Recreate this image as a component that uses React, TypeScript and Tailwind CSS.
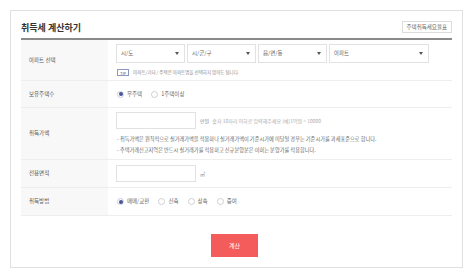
import React, { useState } from "react";

const font = { fontFamily: '"Noto Sans CJK KR", "Noto Sans", sans-serif' };

const Select = ({ label, width }: { label: string; width: string }) => (
  <div
    className={`${width} h-[19px] border border-[#e2e2e2] bg-white flex items-center justify-between pl-[4px] pr-[5px] text-[5.5px] text-[#666]`}
  >
    <span>{label}</span>
    <span className="w-0 h-0 border-l-[2px] border-r-[2px] border-t-[3px] border-l-transparent border-r-transparent border-t-[#555]" />
  </div>
);

const Radio = ({
  label,
  checked,
  onClick,
}: {
  label: string;
  checked: boolean;
  onClick: () => void;
}) => (
  <button onClick={onClick} className="flex items-center gap-[3px] text-[5.5px] text-[#666]">
    <span
      className={`w-[7px] h-[7px] rounded-full border flex items-center justify-center ${
        checked ? "border-[#c9cde0]" : "border-[#cfcfcf]"
      }`}
    >
      {checked && <span className="w-[4px] h-[4px] rounded-full bg-[#4a5595]" />}
    </span>
    {label}
  </button>
);

const Row = ({
  label,
  height,
  children,
}: {
  label: string;
  height: string;
  children: React.ReactNode;
}) => (
  <div className={`flex ${height} border-b border-[#eeeeee]`}>
    <div className="w-[87px] shrink-0 bg-[#f8f8f8] flex items-center pl-[8px] text-[5.5px] text-[#555]">
      {label}
    </div>
    <div className="flex-1 flex flex-col justify-center pl-[8px]">{children}</div>
  </div>
);

export default function App() {
  const [owned, setOwned] = useState(0);
  const [method, setMethod] = useState(0);

  return (
    <div className="w-[473px] h-[278px] bg-white p-[10px]" style={font}>
      <div className="h-[258px] border border-[#e0e0e0] px-[10px] flex flex-col">
        {/* Header */}
        <div className="h-[29px] flex items-center justify-between border-b-2 border-[#8a8a8a] shrink-0">
          <h1 className="text-[9px] font-bold text-[#333] pt-[7px]">취득세 계산하기</h1>
          <button className="h-[12px] px-[4px] mt-[5px] border border-[#dcdcdc] text-[5.5px] text-[#666] bg-white">
            주택취득세요율표
          </button>
        </div>

        {/* Table */}
        <Row label="아파트 선택" height="h-[41px]">
          <div className="flex gap-[2px]">
            <Select label="시/도" width="w-[69px]" />
            <Select label="시/군/구" width="w-[69px]" />
            <Select label="읍/면/동" width="w-[69px]" />
            <Select label="아파트" width="w-[100px]" />
          </div>
          <div className="flex items-center gap-[4px] mt-[6px] ml-[1px]">
            <span className="h-[7px] px-[2px] border border-[#8d96c0] text-[4px] leading-none text-[#4a5595] flex items-center">
              TIP
            </span>
            <span className="text-[4.5px] text-[#888]">
              아파트/기타 / 주택은 아파트명을 선택하지 않아도 됩니다.
            </span>
          </div>
        </Row>

        <Row label="보유주택수" height="h-[27px]">
          <div className="flex items-center gap-[9px] ml-[1px]">
            <Radio label="무주택" checked={owned === 0} onClick={() => setOwned(0)} />
            <Radio label="1주택이상" checked={owned === 1} onClick={() => setOwned(1)} />
          </div>
        </Row>

        <Row label="취득가액" height="h-[52px]">
          <div className="flex items-center gap-[4px]">
            <input className="w-[80px] h-[17px] border border-[#e2e2e2] outline-none text-[6px] px-[3px]" />
            <span className="text-[5px] text-[#888]">
              만원 <span className="ml-[2px] text-[#aaa]">숫자 10자리 이하로 입력해주세요 (예)1억원 = 10000</span>
            </span>
          </div>
          <div className="mt-[4px] ml-[1px] text-[5.2px] leading-[11px] text-[#666]">
            <p>- 취득가액은 원칙적으로 실거래가액을 적용하나 실거래가액이 기준시가에 미달될 경우는 기준시가를 과세표준으로 합니다.</p>
            <p>- 주택거래신고지역은 반드시 실거래가를 적용하고 신규분양분은 이하는 분양가를 적용합니다.</p>
          </div>
        </Row>

        <Row label="전용면적" height="h-[28px]">
          <div className="flex items-center gap-[4px]">
            <input className="w-[80px] h-[17px] border border-[#e2e2e2] outline-none text-[6px] px-[3px]" />
            <span className="text-[5px] text-[#888]">㎡</span>
          </div>
        </Row>

        <Row label="취득방법" height="h-[28px]">
          <div className="flex items-center gap-[9px] ml-[1px]">
            {["매매/교환", "신축", "상속", "증여"].map((m, i) => (
              <Radio key={m} label={m} checked={method === i} onClick={() => setMethod(i)} />
            ))}
          </div>
        </Row>

        {/* Action */}
        <div className="flex justify-center mt-[18px]">
          <button className="w-[47px] h-[23px] bg-[#f45b5b] text-white text-[6px] mr-[4px]">
            계산
          </button>
        </div>
      </div>
    </div>
  );
}
